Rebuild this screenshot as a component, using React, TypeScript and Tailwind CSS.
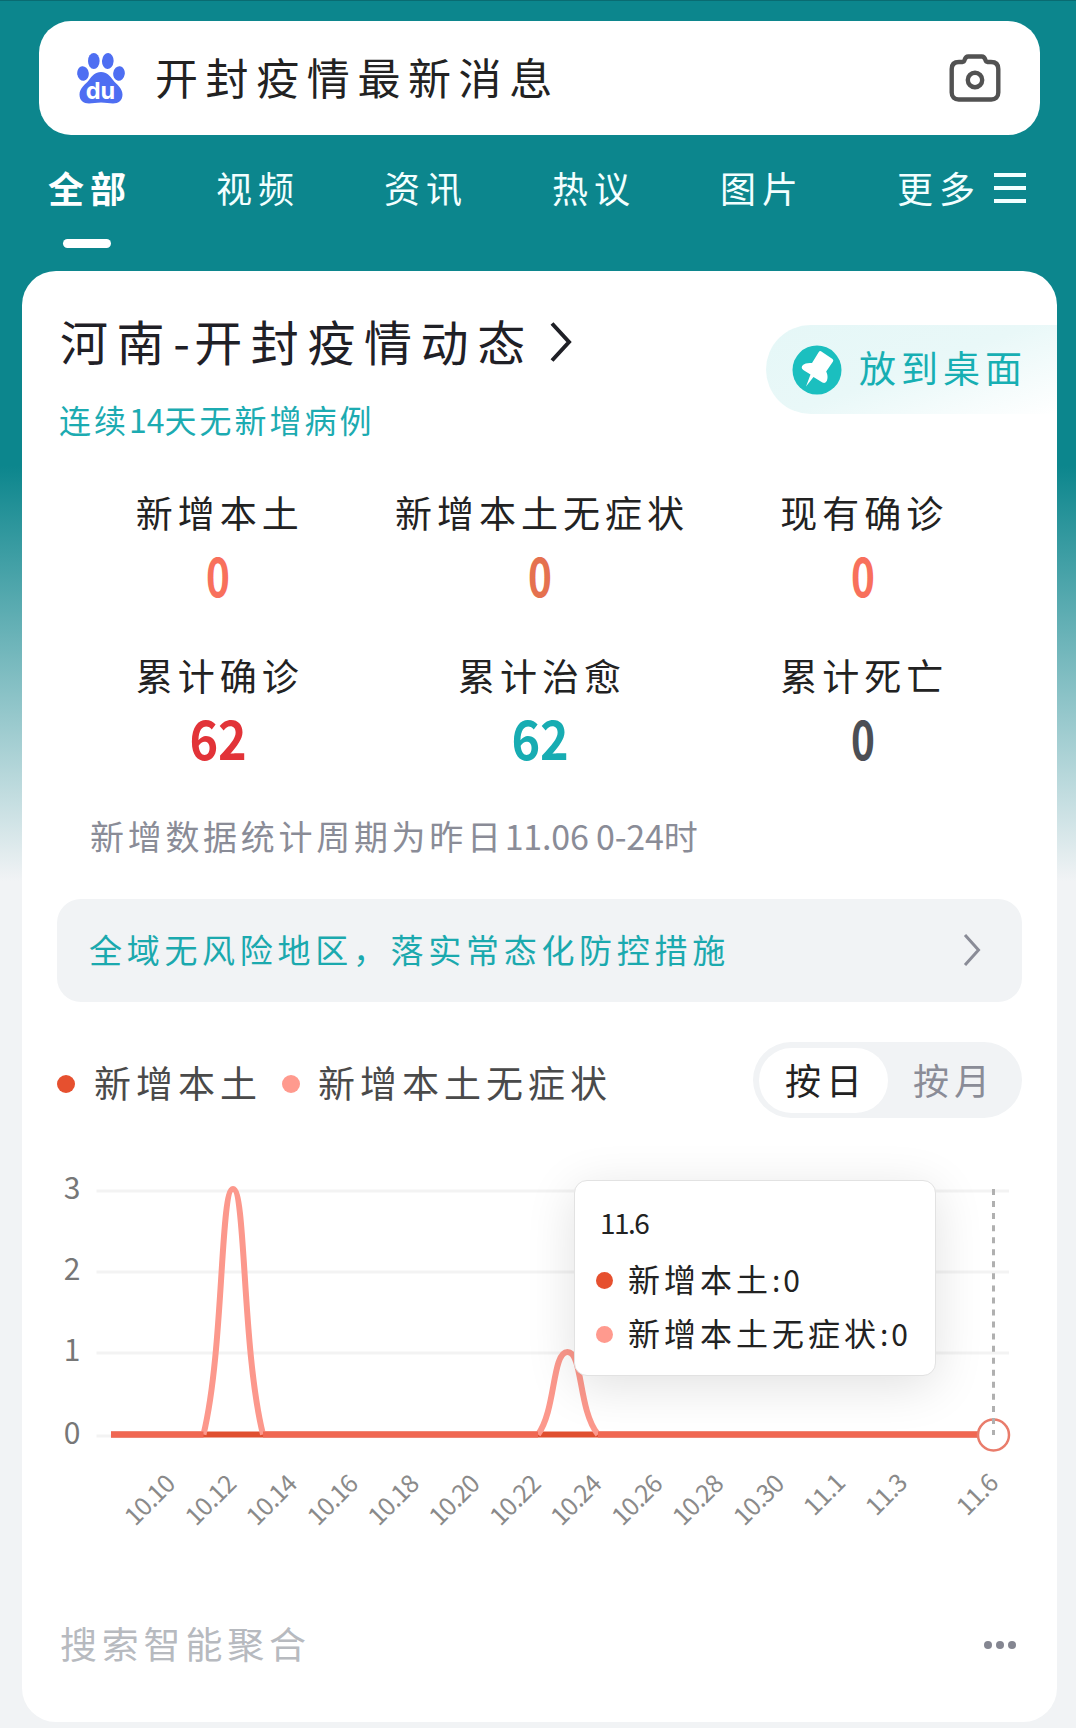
import React from 'react';

interface Stat {
  label: string;
  value: string;
  color: string;
}

const tabs = ['全部', '视频', '资讯', '热议', '图片'];

const stats: Stat[] = [
  { label: '新增本土', value: '0', color: 'text-[#f8705c]' },
  { label: '新增本土无症状', value: '0', color: 'text-[#e5714f]' },
  { label: '现有确诊', value: '0', color: 'text-[#f8705c]' },
  { label: '累计确诊', value: '62', color: 'text-[#e23338]' },
  { label: '累计治愈', value: '62', color: 'text-[#17acb2]' },
  { label: '累计死亡', value: '0', color: 'text-[#4c4f55]' },
];

const gridLines = [
  { label: '3', y: 73 },
  { label: '2', y: 154 },
  { label: '1', y: 235 },
  { label: '0', y: 318 },
];

const dateLabels = [
  { text: '10.10', x: 127.5 },
  { text: '10.12', x: 188.4 },
  { text: '10.14', x: 249.3 },
  { text: '10.16', x: 310.2 },
  { text: '10.18', x: 371.1 },
  { text: '10.20', x: 432 },
  { text: '10.22', x: 492.9 },
  { text: '10.24', x: 553.8 },
  { text: '10.26', x: 614.7 },
  { text: '10.28', x: 675.6 },
  { text: '10.30', x: 736.5 },
  { text: '11.1', x: 802 },
  { text: '11.3', x: 864 },
  { text: '11.6', x: 955 },
];

const PawLogo = () => (
  <svg className="w-12 h-[51px] shrink-0" viewBox="0 0 48 51" fill="#4e6ef2">
    <ellipse cx="6" cy="20.5" rx="5.8" ry="7.3" transform="rotate(-8 6 20.5)" />
    <ellipse cx="16.8" cy="8" rx="5.8" ry="8" />
    <ellipse cx="30.8" cy="8" rx="5.8" ry="8" transform="rotate(4 30.8 8)" />
    <ellipse cx="42" cy="20.5" rx="5.8" ry="7.3" transform="rotate(8 42 20.5)" />
    <path d="M24 19c6 0 9 4 12 8 3.500 4.500 9.500 8 9.500 14.500 0 6-4 9-9.500 9-4 0-7-1-12-1s-8 1-12 1C6.500 50.500 2.500 47.500 2.500 41.500c0-6.500 6-10 9.500-14.500 3-4 6-8 12-8z" />
    <text x="23.500" y="45.500" textAnchor="middle" fontSize="23.500" fontWeight="700" fill="#fff" fontFamily="Inter, sans-serif">du</text>
  </svg>
);

const CameraIcon = () => (
  <svg className="w-[52px] h-12" viewBox="0 0 52 48" fill="none" stroke="#525252" strokeWidth="4.400" strokeLinejoin="round">
    <path d="M10 8h3.500c1.500 0 1.800-1 2.200-2.300.7-2.300 1.500-3.200 3.500-3.200h13.600c2 0 2.800.9 3.500 3.200.4 1.300.7 2.300 2.200 2.300H42c5 0 7.300 2.600 7.300 7v23.500c0 4.500-2.800 7-7 7H9.700c-4.200 0-7-2.500-7-7V15c0-4.400 2.300-7 7.300-7z" />
    <circle cx="26" cy="26" r="7.200" />
  </svg>
);

const PinIcon = () => (
  <svg className="w-[50px] h-[50px] shrink-0" viewBox="0 0 50 50">
    <circle cx="25" cy="25" r="24.500" fill="#1bbfbf" />
    <path
      d="M29 6.300L40.500 14q1.400 1 .5 2.500L34.200 26.500q2.300 5 .8 9-1.400 3.500-4.600 2L21.500 32 14 41.500l4.500-12-7.200-4.500q-3-2.200-.3-5 2.500-2.500 9-2L26.800 7q.9-1.500 2.200-.7z"
      fill="#fff"
    />
  </svg>
);

const TrendChart = () => (
  <svg className="w-[1035px] h-[442px] block" viewBox="0 0 1035 442" fontFamily="'Noto Sans CJK SC', sans-serif">
    {gridLines.map(line => (
      <g key={line.label}>
        <line x1="74.500" x2="987" y1={line.y} y2={line.y} stroke="#f3f3f3" strokeWidth="3" />
        <text x="50" y={line.y + 8} textAnchor="middle" fontSize="30" fill="#777">{line.label}</text>
      </g>
    ))}

    {/* 折线 */}
    <path d="M89 316.500H971" stroke="#e04f30" strokeWidth="6" />
    <g fill="none" stroke="#fc988c" strokeWidth="6">
      <path d="M181.500 316.500C202 232 198 71 211 71S220 232 241 316.500" />
      <path d="M516 316.500C534 292 530 234 545.500 234S556 292 576 316.500" />
    </g>
    <path d="M89 316.500H181.500M241 316.500H516M576 316.500H971" stroke="#f06752" strokeWidth="6" />

    {/* 当前日期 */}
    <circle cx="971.500" cy="317" r="15.500" fill="#fff" stroke="#e97c6b" strokeWidth="2.500" />
    <path d="M971.500 71V317" stroke="#b0b0b0" strokeWidth="3" strokeDasharray="6 6.050" />

    {dateLabels.map(d => {
      const y = d.text.length === 4 ? 376.5 : 382;
      return (
        <text
          key={d.text}
          transform={`translate(${d.x} ${y}) rotate(-45)`}
          y="9"
          textAnchor="middle"
          fontSize="25"
          letterSpacing="-0.800"
          fill="#8a8a8a"
        >
          {d.text}
        </text>
      );
    })}
  </svg>
);

export default function App() {
  return (
    <div className="w-[1076px] h-[1728px] overflow-hidden border-t border-[#0a6b71] bg-[linear-gradient(180deg,#0c868d_0px,#0c868d_465px,#f1f3f5_880px)] pt-5 font-['Noto_Sans_CJK_SC',sans-serif] text-[#222]">
      {/* 搜索框 */}
      <div className="ml-[39px] w-[1001px] h-[114px] rounded-[32px] bg-white flex items-center pl-[38px] pr-[39px]">
        <PawLogo />
        <div className="ml-[30px] mb-1 flex-1 text-[43px] leading-[60px] tracking-[7.600px]">开封疫情最新消息</div>
        <CameraIcon />
      </div>

      {/* 导航 */}
      <nav className="h-[136px] pt-[30px] pl-[3px] flex text-[36px] leading-[44px] tracking-[6px] text-[#f2ffff]">
        {tabs.map((tab, i) => (
          <div key={tab} className="w-[168px] flex flex-col items-center">
            <span className={i === 0 ? 'pl-1.5 font-bold text-white' : 'pl-1.5'}>{tab}</span>
            {i === 0 && <div className="mt-[30px] w-12 h-[9px] rounded-full bg-white" />}
          </div>
        ))}
        <div className="ml-[54px] h-[46px] flex items-center">
          <span className="mb-0.5">更多</span>
          <div className="ml-[13px] w-8 flex flex-col gap-[9px]">
            <div className="h-1 bg-[#f2ffff]" />
            <div className="h-1 bg-[#f2ffff]" />
            <div className="h-1 bg-[#f2ffff]" />
          </div>
        </div>
      </nav>

      <main className="ml-[22px] w-[1035px] h-[1451px] rounded-[34px] bg-white overflow-hidden">
        {/* 标题 */}
        <header className="h-[170px] flex justify-between">
          <div className="pt-[39px] pl-9">
            <h1 className="h-[60px] pl-0.5 flex items-center text-[48px] leading-[60px] tracking-[8.600px] text-[#1f2026]">
              <span>河南</span>
              <span className="w-[21px] tracking-normal">-</span>
              <span>开封疫情动态</span>
              <svg className="mt-1 ml-[15px] w-6 h-10" viewBox="0 0 24 40" fill="none" stroke="#1f2026" strokeWidth="4">
                <path d="M3 1.500L20 20 3 38.500" />
              </svg>
            </h1>
            <p className="mt-[29px] pl-px text-[32px] leading-10 tracking-[3px] text-[#1cabb1]">
              连续<span className="tracking-normal">14</span>天无新增病例
            </p>
          </div>
          <button className="mt-[54px] w-[291px] h-[89px] rounded-l-full bg-[linear-gradient(160deg,#e5f7f7_0%,#e9f8f8_50%,#ffffff_100%)] flex items-center pl-[26px] text-[37px] tracking-[5px] text-[#17afb3]">
            <PinIcon />
            <span className="ml-[17px] mb-1">放到桌面</span>
          </button>
        </header>

        {/* 数据 */}
        <section className="mt-[48px] mx-[34px] grid grid-cols-3 gap-y-[51px] text-center">
          {stats.map(stat => (
            <div key={stat.label}>
              <div className="text-[37px] leading-[46px] tracking-[5px] pl-[5px] whitespace-nowrap">{stat.label}</div>
              <div className={`mt-3 h-[54px] pl-0.5 text-[54px] leading-[54px] font-bold ${stat.value === '0' ? 'scale-x-75' : 'scale-x-90'} ${stat.color}`}>
                {stat.value}
              </div>
            </div>
          ))}
        </section>

        <p className="mt-[52px] pl-[68px] text-[34px] leading-10 tracking-[3.7px] text-[#8a8c97]">
          新增数据统计周期为昨日<span className="tracking-[-0.2px]">11.06 0-24</span>时
        </p>

        <div className="mt-[43px] mx-[35px] h-[103px] rounded-3xl bg-[#f1f3f5] flex items-center justify-between pl-[32px] pr-[41px]">
          <span className="mb-0.5 text-[33px] tracking-[4.700px] text-[#1ba9ae]">全域无风险地区，落实常态化防控措施</span>
          <svg className="mb-0.5 w-[18px] h-8" viewBox="0 0 18 32" fill="none" stroke="#8a8c97" strokeWidth="3">
            <path d="M2 1l13.500 15L2 31" />
          </svg>
        </div>

        {/* 图例与切换 */}
        <div className="mt-10 mx-[35px] h-[76px] flex items-center justify-between text-[37px] tracking-[5px]">
          <div className="flex items-center pt-1.5 text-[#4a4a4a]">
            <i className="mt-0.5 w-[18px] h-[18px] rounded-full bg-[#e6502f]" />
            <span className="ml-[19px]">新增本土</span>
            <i className="mt-0.5 ml-[20px] w-[18px] h-[18px] rounded-full bg-[#ff9a8e]" />
            <span className="ml-[18px]">新增本土无症状</span>
          </div>
          <div className="w-[269px] h-[76px] rounded-full bg-[#f1f3f5] flex items-center pl-1.5 leading-[62px]">
            <span className="w-[129px] h-[65px] rounded-full bg-white text-center pl-[5px] text-[36px]">按日</span>
            <span className="w-[130px] h-[65px] text-center pl-0.5 text-[36px] text-[#8a8c97]">按月</span>
          </div>
        </div>

        {/* 趋势图 */}
        <div className="relative">
          <TrendChart />
          <div className="absolute left-[552px] top-[62px] w-[362px] h-[196px] rounded-[13px] border border-[#e2e2e2] bg-white shadow-[0_10px_50px_rgba(0,0,0,0.12)] pl-[21px] pt-[18px] text-[32px] tracking-[4px]">
            <div className="pl-1 text-[28px] leading-[46px] tracking-[-1.500px]">11.6</div>
            <div className="mt-2 h-[54px] flex items-center">
              <i className="w-[17px] h-[17px] rounded-full bg-[#e6502f]" />
              <span className="ml-[15px] mb-1">新增本土<span className="text-[30px] tracking-[3px]">:0</span></span>
            </div>
            <div className="h-[54px] flex items-center">
              <i className="w-[17px] h-[17px] rounded-full bg-[#ff9a8e]" />
              <span className="ml-[15px] mb-1 whitespace-nowrap">新增本土无症状<span className="text-[30px] tracking-[3px]">:0</span></span>
            </div>
          </div>
        </div>

        <footer className="mt-[55px] h-[60px] pl-[38px] pr-[41px] flex items-center justify-between text-[37px] tracking-[4.800px] text-[#b7babf]">
          <span className="mb-0.5">搜索智能聚合</span>
          <div className="flex gap-1">
            <i className="w-2 h-2 rounded-full bg-[#848691]" />
            <i className="w-2 h-2 rounded-full bg-[#848691]" />
            <i className="w-2 h-2 rounded-full bg-[#848691]" />
          </div>
        </footer>
      </main>
    </div>
  );
}
